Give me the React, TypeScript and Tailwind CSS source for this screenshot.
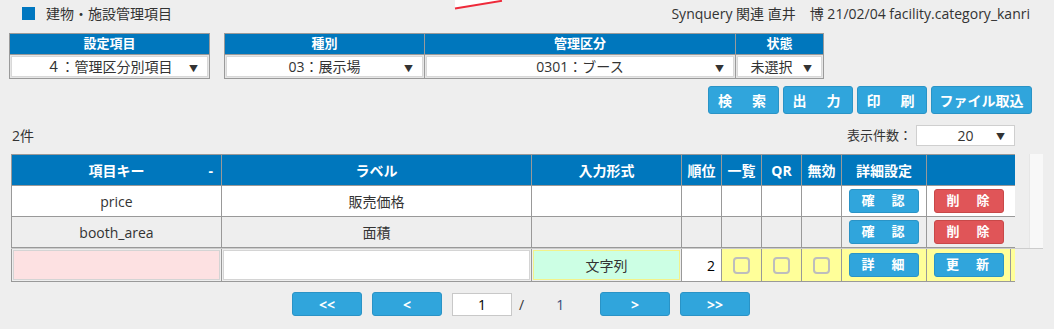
import React from "react";

type Col = { label: string; w: string; value: string; pad?: string };

const blueBtn =
  "flex items-center justify-center rounded-[3px] border border-[#2a93c6] bg-[#30a5dc] font-bold text-white";
const redBtn =
  "flex items-center justify-center rounded-[3px] border border-[#c84848] bg-[#e05558] font-bold text-white";

function FilterTable({ cols, width }: { cols: Col[]; width: string }) {
  return (
    <div className={`${width} border border-[#9a9a9a] bg-[#e6e6e6]`}>
      <div className="flex h-[20px] bg-[#0077bd] text-[13px] font-bold text-white">
        {cols.map((c, i) => (
          <div
            key={c.label}
            className={`${c.w} flex items-center justify-center ${
              i > 0 ? "border-l border-[#9a9a9a]" : ""
            }`}
          >
            {c.label}
          </div>
        ))}
      </div>
      <div className="flex h-[24px] border-t border-[#9a9a9a]">
        {cols.map((c, i) => (
          <div
            key={c.label}
            className={`${c.w} p-[1px] ${i > 0 ? "border-l border-[#9a9a9a]" : ""}`}
          >
            <div
              className={`relative flex h-full items-center justify-center border border-[#d8d8d8] bg-white text-[14px] text-[#333] ${
                c.pad ?? ""
              }`}
            >
              {c.value}
              <span className="absolute right-[9px] top-[5px] text-[9px] text-[#333]">
                ▼
              </span>
            </div>
          </div>
        ))}
      </div>
    </div>
  );
}

const widths = [
  "w-[210px]",
  "w-[310px]",
  "w-[150px]",
  "w-[40px]",
  "w-[40px]",
  "w-[40px]",
  "w-[40px]",
  "w-[85px]",
];

const headers = ["項目キー", "ラベル", "入力形式", "順位", "一覧", "QR", "無効", "詳細設定"];

function BodyRow({ k, label, bg }: { k: string; label: string; bg: string }) {
  return (
    <div className={`flex h-[31px] border-b border-l border-[#999] ${bg} text-[14px] text-[#333]`}>
      <div className={`${widths[0]} flex items-center justify-center border-r border-[#999]`}>{k}</div>
      <div className={`${widths[1]} flex items-center justify-center border-r border-[#999]`}>{label}</div>
      <div className={`${widths[2]} border-r border-[#999]`} />
      <div className={`${widths[3]} border-r border-[#999]`} />
      <div className={`${widths[4]} border-r border-[#999]`} />
      <div className={`${widths[5]} border-r border-[#999]`} />
      <div className={`${widths[6]} border-r border-[#999]`} />
      <div className={`${widths[7]} flex items-center justify-center border-r border-[#999]`}>
        <div className={`${blueBtn} h-[24px] w-[70px] text-[13px] tracking-[2px]`}>確　認</div>
      </div>
      <div className="flex w-[84px] items-center justify-center">
        <div className={`${redBtn} h-[24px] w-[70px] text-[13px] tracking-[2px]`}>削　除</div>
      </div>
    </div>
  );
}

function Check() {
  return <div className="h-[17px] w-[17px] rounded-[4px] border-2 border-[#bdbdbd]" />;
}

export default function App() {
  return (
    <div className="relative h-[329px] w-[1054px] overflow-hidden bg-[#eeeeee] font-['Open_Sans','Noto_Sans_CJK_JP',sans-serif] text-[#333]">
      <svg className="absolute left-[450px] top-0" width="56" height="12" viewBox="0 0 56 12">
        <polygon points="5,0 52,0 52,1 5,8" fill="#ffffff" />
        <line x1="5" y1="8.5" x2="52" y2="0.8" stroke="#ee2a3a" strokeWidth="2" />
      </svg>

      {/* title bar */}
      <div className="flex h-[27px] items-center justify-between pl-[22px] pr-[24px]">
        <div className="flex items-center">
          <div className="h-[13px] w-[13px] bg-[#0077c0]" />
          <span className="ml-[11px] text-[14px]">建物・施設管理項目</span>
        </div>
        <div className="text-[14px]">Synquery 関連 直井　博 21/02/04 facility.category_kanri</div>
      </div>

      {/* filters */}
      <div className="mt-[6px] flex gap-[14px] pl-[9px]">
        <FilterTable
          width="w-[201px]"
          cols={[{ label: "設定項目", w: "w-[199px]", value: "４：管理区分別項目" }]}
        />
        <FilterTable
          width="w-[600px]"
          cols={[
            { label: "種別", w: "w-[199px]", value: "03：展示場" },
            { label: "管理区分", w: "w-[311px]", value: "0301：ブース" },
            { label: "状態", w: "w-[88px]", value: "未選択", pad: "pr-[16px]" },
          ]}
        />
      </div>

      {/* action buttons */}
      <div className="mt-[7px] flex justify-end gap-[4px] pr-[22px]">
        <div className={`${blueBtn} h-[28px] w-[71px] text-[14px] tracking-[3px]`}>検　索</div>
        <div className={`${blueBtn} h-[28px] w-[70px] text-[14px] tracking-[3px]`}>出　力</div>
        <div className={`${blueBtn} h-[28px] w-[70px] text-[14px] tracking-[3px]`}>印　刷</div>
        <div className={`${blueBtn} h-[28px] w-[101px] text-[14px]`}>ファイル取込</div>
      </div>

      {/* count + page size */}
      <div className="mt-[11px] flex h-[21px] items-center justify-between pl-[12px] pr-[39px]">
        <span className="text-[14px]">2件</span>
        <div className="flex items-center">
          <span className="mr-[4px] text-[13px]">表示件数：</span>
          <div className="relative flex h-[21px] w-[99px] items-center justify-center border border-[#cfcfcf] bg-white text-[14px]">
            20
            <span className="absolute right-[9px] top-[4px] text-[9px]">▼</span>
          </div>
        </div>
      </div>

      {/* grid */}
      <div className="ml-[11px] mt-[8px] w-[1032px]">
        <div className="flex border-b border-[#cccccc]">
          <div className="w-[1004px]">
            <div className="flex h-[32px] border-b border-l border-t border-[#999] bg-[#0077bd] text-[14px] font-bold text-white">
              {headers.map((h, i) => (
                <div
                  key={h}
                  className={`${widths[i]} relative flex items-center justify-center border-r border-[#999]`}
                >
                  {h}
                  {i === 0 && <span className="absolute right-[8px]">-</span>}
                </div>
              ))}
              <div className="w-[88px]" />
            </div>
            <BodyRow k="price" label="販売価格" bg="bg-white" />
            <BodyRow k="booth_area" label="面積" bg="bg-[#eeeeee]" />
          </div>
          <div className="ml-[14px] w-[14px] border-l border-[#e6e6e6] bg-[#f8f8f8]" />
        </div>

        {/* new item row */}
        <div className="flex h-[33px] w-[1004px] border-b border-l border-[#999] text-[14px]">
          <div className={`${widths[0]} border-r border-[#999] p-[1px]`}>
            <div className="h-full border border-[#d4d4d4] bg-[#fde1e2]" />
          </div>
          <div className={`${widths[1]} border-r border-[#999] p-[1px]`}>
            <div className="h-full border border-[#d4d4d4] bg-white" />
          </div>
          <div className={`${widths[2]} border-r border-[#999] p-[1px]`}>
            <div className="flex h-full items-center justify-center border border-[#f2f28a] bg-[#ccffe4]">
              文字列
            </div>
          </div>
          <div className={`${widths[3]} flex items-center justify-end border-r border-[#999] bg-white pr-[6px] text-[14px] text-black`}>
            2
          </div>
          <div className={`${widths[4]} flex items-center justify-center border-r border-[#999] bg-[#ffff99]`}>
            <Check />
          </div>
          <div className={`${widths[5]} flex items-center justify-center border-r border-[#999] bg-[#ffff99]`}>
            <Check />
          </div>
          <div className={`${widths[6]} flex items-center justify-center border-r border-[#999] bg-[#ffff99]`}>
            <Check />
          </div>
          <div className={`${widths[7]} flex items-center justify-center border-r border-[#999] bg-[#ffff99]`}>
            <div className={`${blueBtn} h-[24px] w-[70px] text-[13px] tracking-[2px]`}>詳　細</div>
          </div>
          <div className="flex w-[88px] items-center bg-[#ffff99]">
            <div className="flex h-full w-[84px] items-center justify-center border-r border-[#999]">
              <div className={`${blueBtn} h-[24px] w-[70px] text-[13px] tracking-[2px]`}>更　新</div>
            </div>
          </div>
        </div>
      </div>

      {/* pager */}
      <div className="mt-[10px] flex h-[24px] items-center pl-[292px] text-[14px]">
        <div className={`${blueBtn} h-[24px] w-[70px]`}>&lt;&lt;</div>
        <div className={`${blueBtn} ml-[10px] h-[24px] w-[70px]`}>&lt;</div>
        <div className="ml-[10px] flex h-[23px] w-[60px] items-center justify-center border border-[#c8c8c8] bg-white text-[14px] text-black">
          1
        </div>
        <div className="flex w-[88px] items-center text-[14px]">
          <span className="ml-[7px]">/</span>
          <span className="ml-[32px] text-[#3a4a7a]">1</span>
        </div>
        <div className={`${blueBtn} h-[24px] w-[70px]`}>&gt;</div>
        <div className={`${blueBtn} ml-[10px] h-[24px] w-[70px]`}>&gt;&gt;</div>
      </div>
    </div>
  );
}
